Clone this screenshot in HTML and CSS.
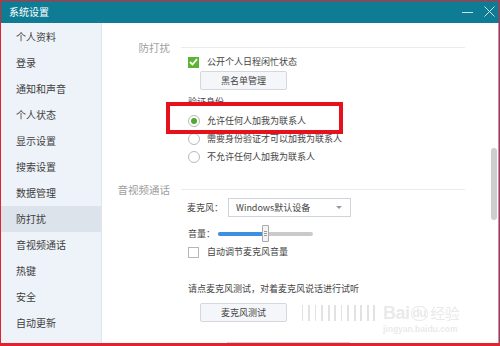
FILE: index.html
```html
<!DOCTYPE html>
<html>
<head>
<meta charset="utf-8">
<link rel="stylesheet" href="styles.css">
</head>
<body>
<div class="frame">
  <div class="titlebar">
    <span class="title">系统设置</span>
    <div class="controls">
      <span class="min"></span>
      <svg class="close" width="11" height="11" viewBox="0 0 11 11"><path d="M0.5 0.5 L10.5 10.5 M10.5 0.5 L0.5 10.5" stroke="#cfe3ea" stroke-width="1" fill="none"/></svg>
    </div>
  </div>
  <div class="main">
    <ul class="sidebar">
      <li>个人资料</li>
      <li>登录</li>
      <li>通知和声音</li>
      <li>个人状态</li>
      <li>显示设置</li>
      <li>搜索设置</li>
      <li>数据管理</li>
      <li class="active">防打扰</li>
      <li>音视频通话</li>
      <li>热键</li>
      <li>安全</li>
      <li>自动更新</li>
    </ul>
    <div class="content">
      <div class="heading"><span class="hlabel">防打扰</span><span class="hline"></span></div>
      <div class="row r-check">
        <span class="cbox checked"><svg width="9" height="8" viewBox="0 0 9 8"><path d="M1 4 L3.5 6.5 L8 1.2" stroke="#fff" stroke-width="1.8" fill="none"/></svg></span>
        <span class="txt">公开个人日程闲忙状态</span>
      </div>
      <div class="row r-btn"><span class="btn">黑名单管理</span></div>
      <div class="row r-label"><span class="txt">验证身份</span></div>
      <div class="radios">
        <div class="row r-radio"><span class="radio on"></span><span class="txt">允许任何人加我为联系人</span></div>
        <div class="row r-radio"><span class="radio"></span><span class="txt">需要身份验证才可以加我为联系人</span></div>
        <div class="row r-radio"><span class="radio"></span><span class="txt">不允许任何人加我为联系人</span></div>
        <div class="highlight"></div>
      </div>
      <div class="heading h2"><span class="hlabel">音视频通话</span><span class="hline"></span></div>
      <div class="row r-mic">
        <span class="flabel mic">麦克风：</span>
        <span class="select"><span class="stext">Windows默认设备</span><span class="arrow"></span></span>
      </div>
      <div class="row r-vol">
        <span class="flabel vol">音量：</span>
        <span class="track"><span class="fill"></span><span class="thumb"><i></i><i></i><i></i></span></span>
      </div>
      <div class="row r-auto">
        <span class="cbox"></span>
        <span class="txt">自动调节麦克风音量</span>
      </div>
      <div class="row r-hint"><span class="txt">请点麦克风测试，对着麦克风说话进行试听</span></div>
      <div class="row r-test">
        <span class="btn">麦克风测试</span>
        <span class="meter"></span>
      </div>
      <div class="row r-next"><span class="select next"></span></div>
      <div class="scrollbar"></div>
      <div class="watermark">
        <div class="wm-logo"><span>Bai</span><span class="paw">du</span><span class="wm-cn">经验</span></div>
        <div class="wm-url">jingyan.baidu.com</div>
      </div>
    </div>
  </div>
</div>
</body>
</html>
```
FILE: styles.css
```css
* { box-sizing: border-box; margin: 0; padding: 0; }
html, body { width: 500px; height: 346px; overflow: hidden; }
body {
  font-family: "Noto Sans CJK SC", "Noto Sans", sans-serif;
  color: #444;
  background: #fff;
}
.frame {
  width: 500px;
  height: 346px;
  border: 1px solid #e3232b;
  border-bottom-width: 3px;
  display: flex;
  flex-direction: column;
}
.titlebar {
  height: 22px;
  background: #0e7c95;
  display: flex;
  align-items: center;
  justify-content: space-between;
  padding-left: 8px;
  padding-right: 4px;
  flex-shrink: 0;
}
.title { color: #fff; font-size: 10px; line-height: 14px; }
.controls { display: flex; align-items: center; gap: 11px; }
.min { width: 11px; height: 1px; background: #cfe3ea; }
.close { display: block; margin-top: -1px; }
.main { flex: 1; display: flex; min-height: 0; }
.sidebar {
  list-style: none;
  width: 101px;
  background: #eef3fa;
  border-right: 1px solid #e0e6ee;
  padding-top: 1px;
  flex-shrink: 0;
}
.sidebar li {
  height: 26px;
  line-height: 26px;
  padding-left: 15px;
  font-size: 10px;
  color: #3e3e3e;
}
.sidebar li.active { background: #dce3ea; }
.content {
  flex: 1;
  position: relative;
  overflow: hidden;
  border-right: 1px solid #7fa8d4;
  padding-top: 18px;
  display: flex;
  flex-direction: column;
}
.heading { display: flex; align-items: center; height: 14px; flex-shrink: 0; }
.hlabel {
  width: 68px;
  text-align: right;
  font-size: 10.5px;
  color: #9e9e9e;
  line-height: 14px;
}
.hline { width: 284px; height: 1px; background: #ebebeb; margin-left: 11px; margin-top: -1px; }
.h2 { margin-top: 17px; }
.row { display: flex; align-items: center; padding-left: 86px; flex-shrink: 0; }
.txt { font-size: 9px; line-height: 12px; color: #444; }
.r-check { height: 14px; }
.cbox {
  width: 11px;
  height: 11px;
  border: 1px solid #b5b5b5;
  background: #fff;
  margin-right: 8px;
  display: flex;
  align-items: center;
  justify-content: center;
}
.cbox.checked { background: #5cb531; border-color: #5cb531; }
.cbox svg { display: block; }
.r-btn { margin-top: 2px; height: 19px; padding-left: 98px; }
.btn {
  width: 87px;
  height: 19px;
  border: 1px solid #d3d8df;
  border-radius: 2px;
  background: #f4f6fa;
  font-size: 9px;
  line-height: 17px;
  text-align: center;
  color: #444;
}
.r-label { margin-top: 5px; height: 14px; }
.radios { position: relative; margin-top: 3px; }
.r-radio { height: 18px; }
.radio {
  width: 12px;
  height: 12px;
  border: 1px solid #b9b9b9;
  border-radius: 50%;
  background: #fff;
  margin-right: 7px;
  display: flex;
  align-items: center;
  justify-content: center;
}
.radio.on::after {
  content: "";
  width: 6px;
  height: 6px;
  border-radius: 50%;
  background: #52a72d;
}
.highlight {
  position: absolute;
  left: 64px;
  top: -10px;
  width: 177px;
  height: 32px;
  border: 4px solid #e5121e;
}
.r-mic { height: 19px; margin-top: 1px; padding-left: 85px; }
.flabel { font-size: 9px; line-height: 12px; color: #444; }
.mic { width: 41px; }
.select {
  width: 123px;
  height: 19px;
  border: 1px solid #cfd4da;
  background: #fff;
  display: flex;
  align-items: center;
  justify-content: space-between;
  padding-left: 7px;
  padding-right: 8px;
}
.stext { font-size: 9px; color: #444; }
.arrow {
  width: 0;
  height: 0;
  border-left: 3px solid transparent;
  border-right: 3px solid transparent;
  border-top: 3px solid #999;
}
.r-vol { height: 17px; margin-top: 8px; }
.vol { width: 30px; }
.track {
  position: relative;
  width: 95px;
  height: 4px;
  border-radius: 2px;
  background: #cacaca;
}
.fill {
  position: absolute;
  left: 0;
  top: 0;
  width: 46px;
  height: 4px;
  border-radius: 2px;
  background: #3d8fe2;
}
.thumb {
  position: absolute;
  left: 44px;
  top: -7px;
  width: 7px;
  height: 17px;
  border: 1px solid #a9a9a9;
  border-radius: 1px;
  background: #f4f4f4;
  display: flex;
  flex-direction: column;
  align-items: center;
  justify-content: center;
  gap: 1px;
}
.thumb i { display: block; width: 3px; height: 1px; background: #999; }
.r-auto { height: 14px; margin-top: 3px; }
.r-hint { height: 14px; margin-top: 23px; }
.r-test { height: 19px; margin-top: 7px; padding-left: 98px; }
.meter {
  width: 77px;
  height: 16px;
  margin-left: 15px;
  background: repeating-linear-gradient(90deg, #e2e2e2 0 1.5px, transparent 1.5px 6.5px);
}
.r-next { margin-top: 20px; padding-left: 125px; }
.next { height: 19px; }
.scrollbar {
  position: absolute;
  right: 1px;
  top: 125px;
  width: 6px;
  height: 72px;
  border-radius: 3px;
  background: #cdcdcd;
}
.watermark {
  position: absolute;
  left: 281px;
  top: 280px;
  color: rgba(200, 200, 200, 0.4);
  font-family: "Liberation Sans", sans-serif;
}
.wm-logo { display: flex; align-items: center; font-size: 18px; font-weight: bold; line-height: 20px; letter-spacing: -0.5px; }
.paw {
  font-size: 12px;
  border: 1.5px solid rgba(200, 200, 200, 0.4);
  border-radius: 45%;
  padding: 0 1px;
  line-height: 13px;
  margin: 0 1px;
}
.wm-cn { font-family: "Noto Sans CJK SC", sans-serif; font-size: 15px; font-weight: normal; margin-left: 1px; }
.wm-url { font-size: 8.5px; font-weight: bold; margin-top: 1px; }
```
